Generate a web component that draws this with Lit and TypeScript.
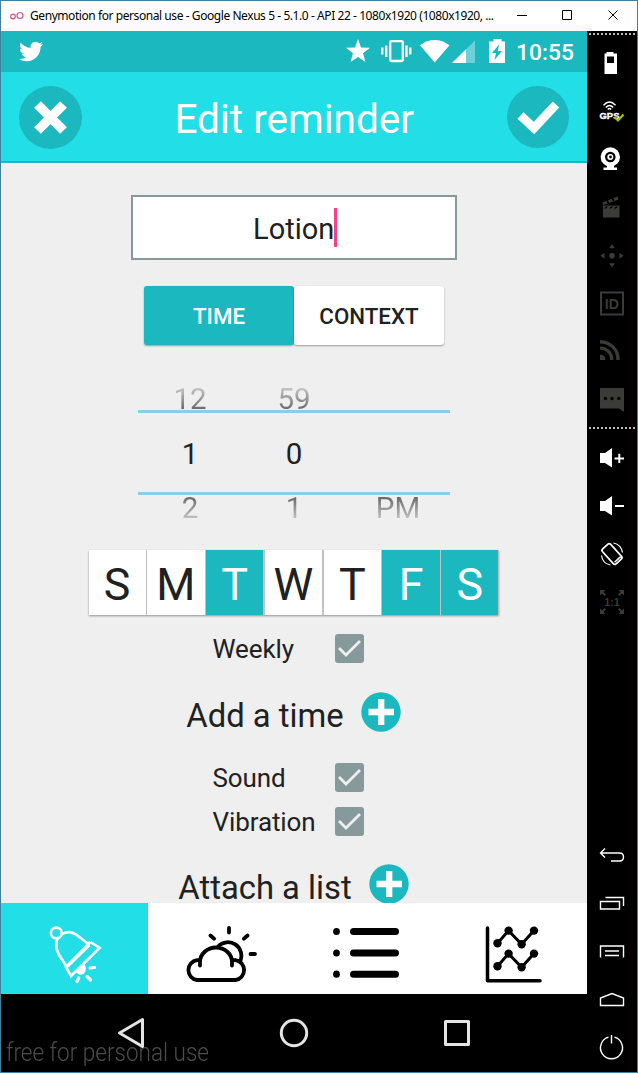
import { LitElement, html, css, svg } from "lit";
import { customElement, property, state } from "lit/decorators.js";
import { classMap } from "lit/directives/class-map.js";

const toolIcon = (name: string) => {
  switch (name) {
    case "battery":
      return svg`<path fill="#fff" fill-rule="evenodd" d="M-5.5-11h7v1.5H5V11H-7.500V-9.500h2zM-5-6.500V0H2V-6.500z"/>`;
    case "gps":
      return svg`<g fill="none" stroke="#fff" stroke-width="1.500"><path d="M-8.500-5.800Q-2.500-12 3.500-5.800"/><path d="M-6.200-3.600Q-2.500-7.400 1.200-3.600"/><path d="M-4.200-1.500Q-2.500-3.400-.8-1.500"/></g>
        <text x="-12.500" y="7.800" class="gps" textLength="20" lengthAdjust="spacingAndGlyphs">GPS</text>
        <path d="M2.500 6L6 9.500L11.500 3.500" fill="none" stroke="#9fc31c" stroke-width="2.200"/>`;
    case "camera":
      return svg`<circle cx="-1.700" cy="-2" r="9.700" fill="#fff"/><circle cx="-1.700" cy="-2" r="5.300"/><circle cx="-1.700" cy="-2" r="3" fill="#fff"/><circle cx="-1.500" cy="-2" r="1.400"/><path d="M-5 6H2V8.500H5V11H-8.500V8.500H-5z" fill="#fff"/>`;
    case "clapper":
      return svg`<path class="dim" d="M-9 -1.500H7.500V10.500H-9z"/><path d="M-8 1.500l2-2h2l-2 2zM-3 1.500l2-2h2l-2 2zM2 1.500l2-2h2l-2 2z"/><path class="dim" d="M-9.500-4.500L5.500-10.500L6.500-7.500L-8.500-2z"/><path d="M-6-6.500L-4.500-3L-3-4L-4-7zM-.5-8.500L1-5.500L2.500-6.500L1-9z"/>`;
    case "move":
      return svg`<g class="dim" transform="translate(0 .8)"><circle r="2.800"/><path d="M0-11.500l3 4h-6zM0 11.500l3-4h-6zM-11.500 0l4-3v6zM11.500 0l-4-3v6z"/></g>`;
    case "id":
      return svg`<rect x="-11" y="-10.500" width="22" height="22" fill="none" class="dimline" stroke-width="2"/><text x="-7.200" y="6.200" class="idtext" textLength="14" lengthAdjust="spacingAndGlyphs">ID</text>`;
    case "rss":
      return svg`<g fill="none" class="dimline" stroke-width="3.200"><path d="M-12-9.200A17.500 17.500 0 0 1 6 9"/><path d="M-12-3A11.500 11.500 0 0 1-.3 9"/></g><path class="dim" d="M-12 3.500A6 6 0 0 1-6.500 9H-12z"/>`;
    case "chat":
      return svg`<g transform="translate(0 1)"><path class="dim" d="M-12-12H12V12L7 8.500H-12z"/><circle cx="-6.500" cy="-1.500" r="1.800"/><circle cy="-1.500" r="1.800"/><circle cx="6.800" cy="-1.500" r="1.800"/></g>`;
    case "volup":
      return svg`<path fill="#fff" d="M-12-5h5L0-10V9.500L-7 5h-5z"/><path d="M2.500 .5H12M7.300-4.200V5" stroke="#fff" stroke-width="2"/>`;
    case "voldown":
      return svg`<path fill="#fff" d="M-12-5h5L0-10V9.500L-7 5h-5z"/><path d="M3 0H12" stroke="#fff" stroke-width="2"/>`;
    case "rotate":
      return svg`<g fill="none" stroke="#fff"><rect x="-5.500" y="-10" width="11" height="20" rx="2" stroke-width="1.700" transform="rotate(-42)"/><path d="M2.500 8.300L8.700 2.600" stroke-width="1.500"/><path d="M1.500-11Q9-9.500 10.500-1.500M-1.500 11Q-9.500 9.500-10.500 1.500" stroke-width="1.200"/></g>`;
    case "scale":
      return svg`<path class="dim" d="M-12-12h5.500l-2 2l2.500 2.500l-1.500 1.500l-2.500-2.500l-2 2zM12-12v5.500l-2-2l-2.500 2.500l-1.500-1.500l2.500-2.500l-2-2zM12 12h-5.500l2-2l-2.500-2.500l1.500-1.500l2.500 2.500l2-2zM-12 12v-5.500l2 2l2.500-2.500l1.500 1.500l-2.500 2.500l2 2z"/><text x="-7.500" y="4" class="scaletext" textLength="15">1:1</text>`;
    case "back":
      return svg`<path class="line" d="M-7-6.500L-11.500-2L-7 2.500M-11-2H7.500Q11.500-2 11.500 2Q11.500 6 7.500 6H-1"/>`;
    case "recents":
      return svg`<path class="line" d="M-11.500-1.500H7.500V6H-11.500zM-6.500-5.500H11.500V3"/>`;
    case "menu":
      return svg`<path class="line" d="M-11.500 6.500V-5H11.500V6.500M-7 0H7M-7 4.500H7"/>`;
    case "home":
      return svg`<path class="line" d="M-11.500 6.500V-1L0-5.500L11.500-1V6.500z"/>`;
    default:
      return svg`<path class="line" d="M2.500-9.800A11 11 0 1 1-3.500-9.800M-.5-12V-3.500"/>`;
  }
};

@customElement("emulator-tools")
class EmulatorTools extends LitElement {
  static styles = css`
    :host { display: flex; flex-direction: column; width: 50px; background: #000; }
    .dots { height: 2px; margin: 2px 1px 4px 2px; background: repeating-linear-gradient(90deg, #bbb 0 2px, #000 2px 4px); }
    .second { margin-top: 4px; margin-bottom: 5px; }
    .bottom { margin-top: auto; margin-bottom: 1px; display: flex; flex-direction: column; }
    svg { display: block; width: 50px; height: 48px; }
    .dim { fill: #3b3b37; }
    .dimline { stroke: #3b3b37; }
    .line { fill: none; stroke: #fff; stroke-width: 1.400; }
    .gps { font: 900 9px "Liberation Sans", sans-serif; fill: #fff; stroke: #fff; stroke-width: .3; }
    .idtext { font: 700 15.500px "Liberation Sans", sans-serif; fill: #3b3b37; }
    .scaletext { font: 700 10px "Liberation Sans", sans-serif; fill: #3b3b37; }
  `;
  icon(name: string) {
    return html`<svg viewBox="-25 -24 50 48">${toolIcon(name)}</svg>`;
  }
  render() {
    return html`
      <div class="dots"></div>
      ${["battery", "gps", "camera", "clapper", "move", "id", "rss", "chat"].map((n) => this.icon(n))}
      <div class="dots second"></div>
      ${["volup", "voldown", "rotate", "scale"].map((n) => this.icon(n))}
      <div class="bottom">${["back", "recents", "menu", "home", "power"].map((n) => this.icon(n))}</div>
    `;
  }
}

@customElement("check-row")
class CheckRow extends LitElement {
  @property() label = "";
  @property({ type: Boolean }) checked = false;
  static styles = css`
    :host { display: flex; justify-content: space-between; align-items: center; width: 151px; height: 30px; font: 26px/30px Roboto, sans-serif; letter-spacing: -0.1px; color: #212121; white-space: nowrap; }
    .box { width: 29px; height: 29px; border-radius: 3px; background: #869a9b; display: flex; }
  `;
  render() {
    return html`<span>${this.label}</span>
      <span class="box" @click=${() => (this.checked = !this.checked)}>
        ${this.checked ? html`<svg width="29" height="29" viewBox="0 0 29 29"><path d="M4 14L11 21L25 7" fill="none" stroke="#efefef" stroke-width="2.800"/></svg>` : ""}
      </span>`;
  }
}

@customElement("app-root")
class AppRoot extends LitElement {
  @state() days = [false, false, true, false, false, true, true];
  static styles = css`
    :host { display: block; width: 638px; height: 1073px; font-family: Roboto, sans-serif; color: #212121; }
    * { box-sizing: border-box; }
    svg { display: block; flex: none; }
    .window { display: flex; flex-direction: column; width: 638px; height: 1073px; border: 1px solid #3f80a0; overflow: hidden; background: #000; }
    .titlebar { display: flex; align-items: center; height: 30px; background: #fff; padding-left: 9px; flex: none; }
    .caption { width: 468px; margin-left: 6px; font: 12px/30px "Noto Sans", sans-serif; letter-spacing: -0.430px; color: #000; white-space: nowrap; }
    .main { display: flex; flex: 1; min-height: 0; }
    .phone { display: flex; flex-direction: column; width: 586px; }
    .status { display: flex; align-items: center; height: 41px; background: #1cb8c0; padding: 0 13px 0 18px; flex: none; }
    .status svg:nth-child(2) { margin-left: auto; }
    .clock { font-weight: 500; font-size: 22.800px; line-height: 41px; margin-left: 10px; width: 58px; color: #fff; white-space: nowrap; padding-top: 2px; }
    .header { display: flex; justify-content: space-between; align-items: center; height: 91px; padding: 2px 17px 0 17.500px; background: #22dee6; border-bottom: 2px solid #1cb8c0; flex: none; }
    .header h1 { margin: 0; font-weight: 400; font-size: 40.600px; line-height: 60px; color: #fff; padding-top: 2px; }
    .content { display: flex; flex-direction: column; align-items: center; height: 740px; background: #efefef; overflow: hidden; padding-top: 32px; flex: none; }
    .content > * { flex: none; }
    .field { display: flex; justify-content: center; align-items: center; width: 326px; height: 65px; border: 2px solid #869a9b; background: #fff; font-size: 29px; padding: 3px 0 0 2px; }
    .caret { width: 2.500px; height: 39px; background: #ff4081; margin-top: -3px; }
    .modes { display: flex; margin-top: 26px; }
    .mode { width: 150px; height: 59px; border-radius: 3px; background: #fff; box-shadow: 0 1px 2px rgba(0,0,0,.35); text-align: center; font-weight: 500; font-size: 22.300px; line-height: 60px; }
    .on { background: #1cb8c0; color: #fff; }
    .picker { display: grid; grid-template-rows: 26px 84.500px 27px; width: 312px; margin-top: 39px; font-size: 29.500px; }
    .prow { display: grid; grid-template-columns: repeat(3, 104px); text-align: center; align-items: start; }
    .prev span, .next span { line-height: 36px; background-clip: text; -webkit-background-clip: text; color: transparent; }
    .prev span { margin-top: -3px; background-image: linear-gradient(#c4c4c4 7px, #686868 29px); }
    .current { border-top: 3px solid #87ceeb; border-bottom: 3.500px solid #87ceeb; line-height: 82px; height: 84.500px; }
    .next span { margin-top: -5px; background-image: linear-gradient(#686868 7px, #c4c4c4 29px); }
    .days { display: flex; gap: 1.500px; width: 410px; height: 65px; margin: 28px 1px 0 0; background: #c2c2c2; box-shadow: 0 1px 2px rgba(0,0,0,.4); }
    .day { flex: 1; background: #fff; text-align: center; font-size: 44.800px; line-height: 69px; }
    .day.on { background: #1cb8c0; }
    .weekly { margin: 19px 12px 0 0; }
    .action { display: flex; align-items: center; height: 40px; font-size: 32.800px; line-height: 40px; gap: 17px; margin-right: 1px; white-space: nowrap; }
    .action span { padding-top: 8px; }
    .add { margin-top: 28px; }
    .sound { margin: 31px 12px 0 0; }
    .vibration { margin: 14px 12px 0 0; }
    .attach { margin-top: 27px; }
    .tabs { display: flex; height: 91px; background: #fff; flex: none; }
    .tab { width: 146.500px; height: 91px; }
    .active { background: #22dee6; }
    .nav { display: flex; position: relative; height: 78px; background: #000; }
    .watermark { position: absolute; left: 5px; top: 41px; font-weight: 300; font-size: 26px; line-height: 34px; color: #4c4c4c; transform: scaleX(.866); transform-origin: 0 0; white-space: nowrap; }
    .nav svg { position: relative; }
  `;
  toggle(i: number) {
    this.days = this.days.map((d, k) => (k === i ? !d : d));
  }
  plus() {
    return html`<svg width="40" height="40" viewBox="0 0 40 40"><circle cx="20" cy="20" r="19.700" fill="#1cb8c0"/><path d="M7.500 20H33M20.200 7V33" stroke="#fff" stroke-width="6.300"/></svg>`;
  }
  render() {
    return html`
      <div class="window">
        <div class="titlebar">
          <svg width="14" height="10" viewBox="10 10 14 10" fill="none" stroke="#e0508a" stroke-width="1.200"><circle cx="13" cy="15.500" r="2.300"/><circle cx="20" cy="14.500" r="3"/></svg>
          <div class="caption">Genymotion for personal use - Google Nexus 5 - 5.1.0 - API 22 - 1080x1920 (1080x1920, ...</div>
          <svg width="140" height="30" viewBox="498 1 140 30" fill="none" stroke="#000"><path d="M518 15.500H528M563.500 10.500H572.500V19.500H563.500zM609.500 10.500L618.500 19.500M618.500 10.500L609.500 19.500"/></svg>
        </div>
        <div class="main">
          <div class="phone">
            <div class="status">
              <svg width="24" height="41" viewBox="0 -8.500 24 41"><path fill="#fff" d="M23.953 4.570a10 10 0 0 1-2.825.775 4.958 4.958 0 0 0 2.163-2.723c-.951.555-2.005.959-3.127 1.184a4.920 4.920 0 0 0-8.384 4.482C7.690 8.095 4.067 6.130 1.640 3.162a4.822 4.822 0 0 0-.666 2.475c0 1.710.870 3.213 2.188 4.096a4.904 4.904 0 0 1-2.228-.616v.060a4.923 4.923 0 0 0 3.946 4.827 4.996 4.996 0 0 1-2.212.085 4.936 4.936 0 0 0 4.604 3.417 9.867 9.867 0 0 1-6.102 2.105c-.390 0-.779-.023-1.170-.067a13.995 13.995 0 0 0 7.557 2.209c9.053 0 13.998-7.496 13.998-13.985 0-.210 0-.420-.015-.630A9.935 9.935 0 0 0 24 4.590z"/></svg>
              <svg width="161" height="41" viewBox="345 31 161 41" fill="#fff">
                <path d="M358 39L361 47.500L370 47.800L363 53.300L365.500 62L358 57L350.500 62L353 53.300L346 47.800L355 47.500z"/>
                <path fill="none" stroke="#fff" stroke-width="2.300" d="M391.500 41.200H401.500Q402.800 41.200 402.800 42.500V59.700Q402.800 61 401.500 61H391.500Q390.200 61 390.200 59.700V42.500Q390.200 41.200 391.500 41.200zM386.300 45.500V57M382.300 47.500V54.500M406.500 45.500V57M410.300 47.500V54.500"/>
                <path d="M420 45.300Q434.500 34.500 449.500 45.300L434.700 62.500z"/>
                <path opacity=".35" d="M475 40.500V63H452z"/><path d="M466 49.300V63H452z"/>
                <path fill-rule="evenodd" d="M493.500 39H501.500V41.500H505V63H489V41.500H493.500zM499 44.500L492 53H496L494.500 60L502 51H498z"/>
              </svg>
              <div class="clock">10:55</div>
            </div>
            <div class="header">
              <svg width="63" height="63" viewBox="0 0 63 63"><circle cx="31.500" cy="31.500" r="31.500" fill="#1cb8c0"/><path d="M18.500 18.500L44.500 44.500M44.500 18.500L18.500 44.500" stroke="#fff" stroke-width="9.500"/></svg>
              <h1>Edit reminder</h1>
              <svg width="63" height="63" viewBox="507 86 63 63"><circle cx="538" cy="117" r="31" fill="#1cb8c0"/><path d="M520.500 115.500L534 128L556 104.500" fill="none" stroke="#fff" stroke-width="8.800"/></svg>
            </div>
            <div class="content">
              <div class="field"><span>Lotion</span><span class="caret"></span></div>
              <div class="modes"><div class="mode on">TIME</div><div class="mode">CONTEXT</div></div>
              <div class="picker">
                <div class="prow prev"><span>12</span><span>59</span></div>
                <div class="prow current"><span>1</span><span>0</span></div>
                <div class="prow next"><span>2</span><span>1</span><span>PM</span></div>
              </div>
              <div class="days">
                ${["S", "M", "T", "W", "T", "F", "S"].map((d, i) => html`<div class=${classMap({ day: true, on: this.days[i] })} @click=${() => this.toggle(i)}>${d}</div>`)}
              </div>
              <check-row class="weekly" label="Weekly" checked></check-row>
              <div class="action add"><span>Add a time</span>${this.plus()}</div>
              <check-row class="sound" label="Sound" checked></check-row>
              <check-row class="vibration" label="Vibration" checked></check-row>
              <div class="action attach"><span>Attach a list</span>${this.plus()}</div>
            </div>
            <div class="tabs">
              <div class="tab active">
                <svg width="146" height="91" viewBox="1 903 146 91" fill="none" stroke="#fff" stroke-width="2.700">
                  <circle cx="56.300" cy="933" r="5.400"/>
                  <path d="M61.500 934.500C67 930.500 73 932 78 936L89.500 945M57.500 938.500C55 944 56 949 59 955L67 967M89.500 945L67 967M90.500 942L99.500 948L71 976L66 967L90.500 942"/>
                  <path fill="#fff" stroke="none" d="M75.500 971.500L84 963.500Q88 970 83.500 974Q79 976.500 75.500 971.500z"/>
                  <path stroke-width="3.200" stroke-linecap="round" d="M90 968L94.500 967.500M87 976.500L90.500 980M78.700 978L77 981.500"/>
                </svg>
              </div>
              <div class="tab">
                <svg width="146" height="91" viewBox="148 903 146 91" fill="none" stroke="#000" stroke-width="3.800" stroke-linecap="round" stroke-linejoin="round">
                  <path d="M200 965.500V962A16 14.500 0 0 1 232 962V965.500M199 960.200H197A10 10 0 0 0 197 980H235.500A10 10 0 0 0 235.500 960.200H233.500M218.500 946A13.500 13.500 0 0 1 240.500 960.500M229 928V932.500M210.500 935.500L214 938.700M247.500 935.500L244 938.700M250.500 954H255"/>
                </svg>
              </div>
              <div class="tab">
                <svg width="146" height="91" viewBox="294 903 146 91">
                  ${[931.5, 953, 974.2].map((y) => svg`<ellipse cx="336.500" cy=${y} rx="3.400" ry="3.600"/><path d="M353.500 ${y}H395.500" stroke="#000" stroke-width="7" stroke-linecap="round"/>`)}
                </svg>
              </div>
              <div class="tab">
                <svg width="146" height="91" viewBox="441 903 146 91">
                  <path d="M487.500 928V980.700H540" fill="none" stroke="#000" stroke-width="3.500" stroke-linecap="round" stroke-linejoin="round"/>
                  ${[0, 23].map((dy) => svg`<path d="M497.500 ${943.3 + dy}L508.600 ${930.6 + dy}L521.600 ${944.2 + dy}L534 ${930.6 + dy}" fill="none" stroke="#000" stroke-width="3"/>
                  ${[[497.5, 943.3], [508.6, 930.6], [521.6, 944.2], [534, 930.6]].map((p) => svg`<circle cx=${p[0]} cy=${p[1] + dy} r="4.200"/>`)}`)}
                </svg>
              </div>
            </div>
            <div class="nav">
              <div class="watermark">free for personal use</div>
              <svg width="586" height="78" viewBox="1 994 586 78" fill="none" stroke="#e4e4e4" stroke-width="3" stroke-linejoin="round"><path d="M142.500 1019.500V1046.500L119.500 1033z"/><circle cx="294" cy="1033" r="12.700"/><rect x="445.500" y="1021.500" width="23" height="23"/></svg>
            </div>
          </div>
          <emulator-tools></emulator-tools>
        </div>
      </div>
    `;
  }
}
